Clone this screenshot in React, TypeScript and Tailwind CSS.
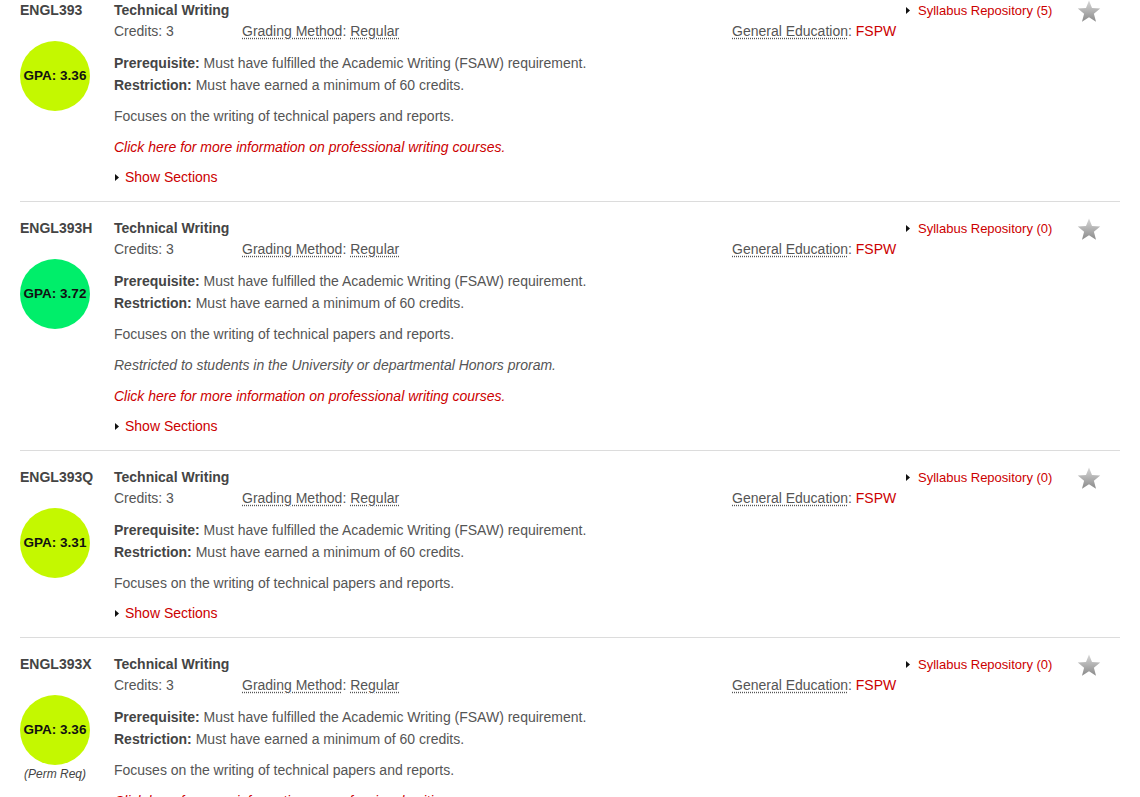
import React from "react";

type Course = {
  code: string;
  gpa: string;
  color: string;
  syllabus: number;
  extra: React.ReactNode[];
  perm?: boolean;
};

const Star = () => (
  <svg width="24" height="23" viewBox="0 0 24 23" aria-hidden>
    <defs>
      <linearGradient id="sg" x1="0" y1="0" x2="0" y2="1">
        <stop offset="0" stopColor="#d8d8d8" />
        <stop offset="1" stopColor="#8a8a8a" />
      </linearGradient>
    </defs>
    <path
      d="M12 0.5 L15 8 L23.2 8.5 L16.9 13.7 L19 21.8 L12 17.3 L5 21.8 L7.1 13.7 L0.8 8.5 L9 8 Z"
      fill="url(#sg)"
    />
  </svg>
);

const Tri = () => (
  <svg width="4" height="7" viewBox="0 0 4 7" className="shrink-0" aria-hidden>
    <path d="M0 0 L4 3.5 L0 7 Z" fill="#111" />
  </svg>
);

const clickHere = (
  <p className="italic text-[#cc0000]">Click here for more information on professional writing courses.</p>
);

const courses: Course[] = [
  { code: "ENGL393", gpa: "3.36", color: "bg-[#c4f800]", syllabus: 5, extra: [clickHere] },
  {
    code: "ENGL393H",
    gpa: "3.72",
    color: "bg-[#00ee6a]",
    syllabus: 0,
    extra: [
      <p className="italic">Restricted to students in the University or departmental Honors proram.</p>,
      clickHere,
    ],
  },
  { code: "ENGL393Q", gpa: "3.31", color: "bg-[#c4f800]", syllabus: 0, extra: [] },
  { code: "ENGL393X", gpa: "3.36", color: "bg-[#c4f800]", syllabus: 0, extra: [clickHere], perm: true },
];

function CourseRow({ c }: { c: Course }) {
  return (
    <div className="flex pt-4 first:pt-0 pb-[13px] border-b border-[#dcdcdc]">
      <div className="w-[94px] shrink-0">
        <div className="h-[21px] leading-[21px] font-bold text-[#444]">{c.code}</div>
        <div
          className={`mt-[20px] w-[70px] h-[70px] rounded-full ${c.color} flex items-center justify-center font-bold text-[13.5px] text-[#111]`}
        >
          GPA: {c.gpa}
        </div>
        {c.perm && (
          <div className="w-[70px] text-center italic text-[12px] leading-[16px] mt-[1px] text-[#444]">
            (Perm Req)
          </div>
        )}
      </div>
      <div className="flex-1 min-w-0">
        <div className="flex">
          <div className="w-[792px] shrink-0">
            <div className="h-[21px] leading-[21px] font-bold text-[#444]">Technical Writing</div>
            <div className="flex h-[21px] leading-[21px] text-[#555]">
              <div className="w-[128px] shrink-0">Credits: 3</div>
              <div className="w-[490px] shrink-0">
                <span className="underline decoration-dotted underline-offset-2 decoration-[#555]">Grading Method</span>:{" "}
                <span className="underline decoration-dotted underline-offset-2 decoration-[#555]">Regular</span>
              </div>
              <div>
                <span className="underline decoration-dotted underline-offset-2 decoration-[#555]">General Education</span>:{" "}
                <span className="text-[#cc0000]">FSPW</span>
              </div>
            </div>
          </div>
          <div className="flex-1 flex items-start">
            <div className="flex items-center gap-[8px] h-[21px] w-[171px] text-[13px] text-[#cc0000]">
              <Tri />
              <span>Syllabus Repository ({c.syllabus})</span>
            </div>
            <Star />
          </div>
        </div>
        <div className="mt-[10px] leading-[22px] text-[#555]">
          <p>
            <b className="text-[#444]">Prerequisite:</b> Must have fulfilled the Academic Writing (FSAW) requirement.
          </p>
          <p>
            <b className="text-[#444]">Restriction:</b> Must have earned a minimum of 60 credits.
          </p>
          <p className="mt-[9px]">Focuses on the writing of technical papers and reports.</p>
          {c.extra.map((e, i) => (
            <div key={i} className="mt-[9px]">
              {e}
            </div>
          ))}
          <div className="mt-[8px] ml-[1px] flex items-center gap-[6px] text-[#cc0000]">
            <Tri />
            <span>Show Sections</span>
          </div>
        </div>
      </div>
    </div>
  );
}

export default function App() {
  return (
    <div
      className="bg-white w-[1140px] h-[797px] overflow-hidden px-[20px] text-[14px]"
      style={{ fontFamily: '"Liberation Sans", Arial, Helvetica, sans-serif' }}
    >
      <div className="w-[1100px]">
        {courses.map((c) => (
          <CourseRow key={c.code} c={c} />
        ))}
      </div>
    </div>
  );
}
